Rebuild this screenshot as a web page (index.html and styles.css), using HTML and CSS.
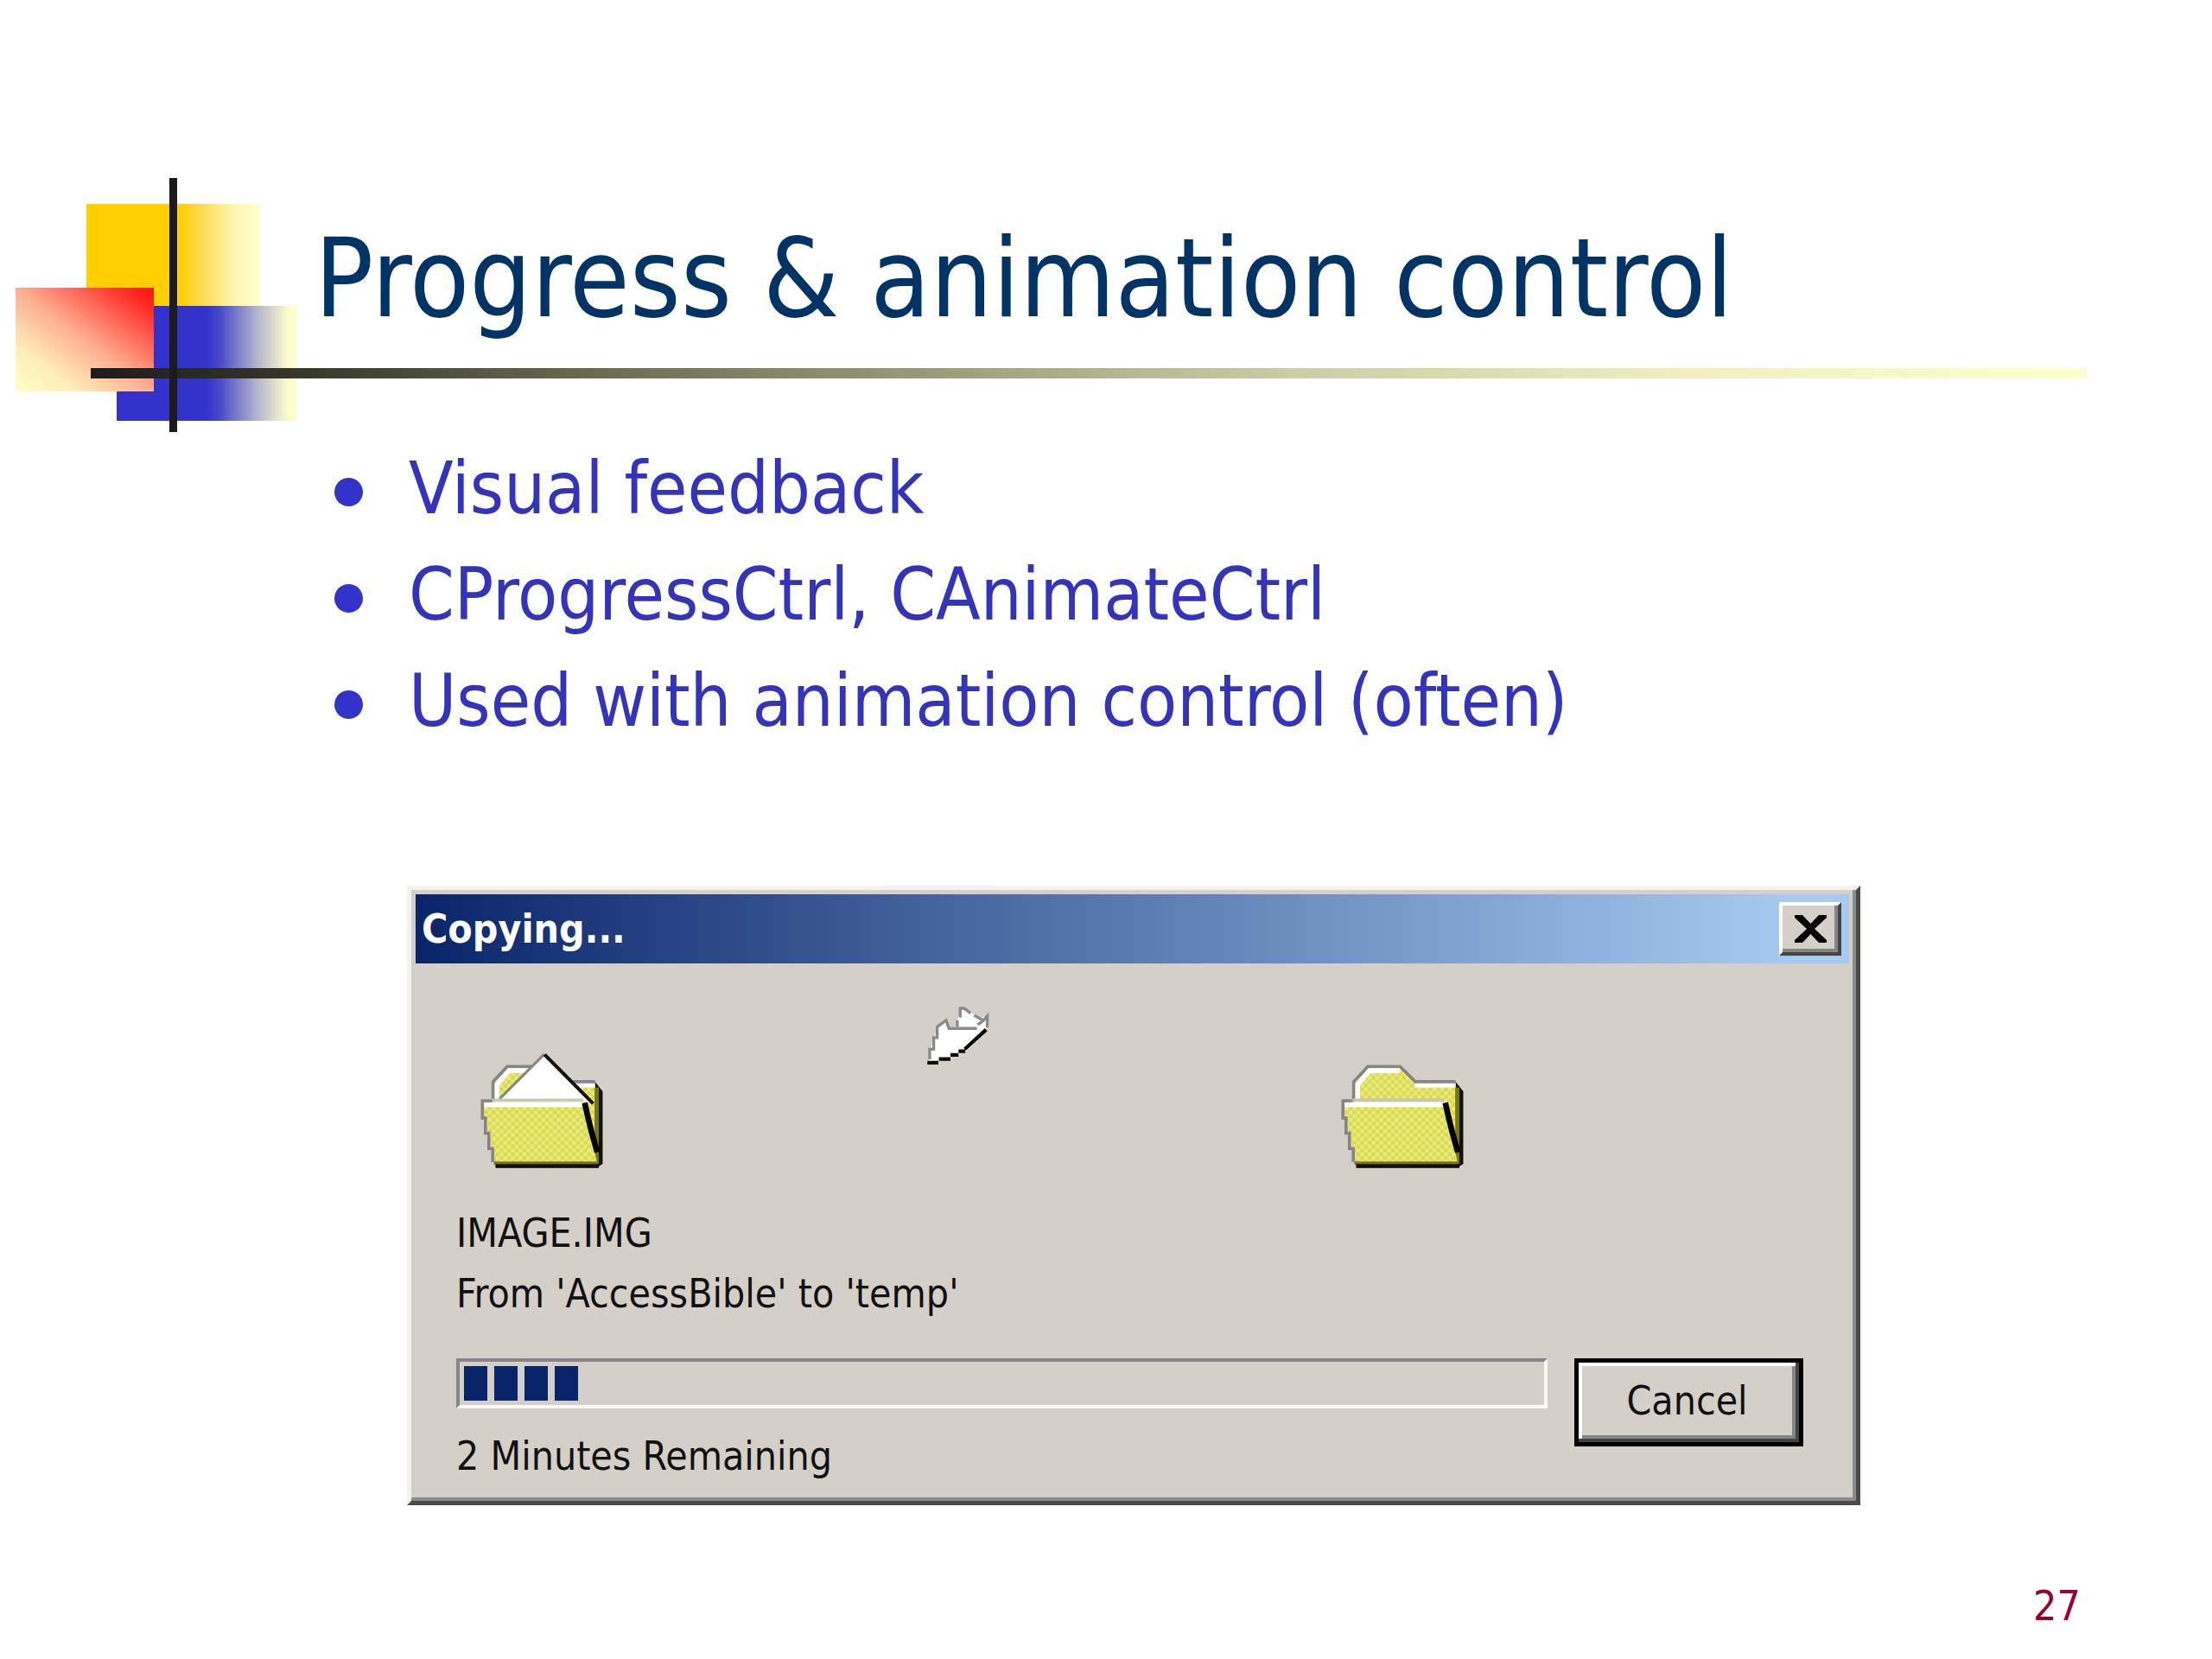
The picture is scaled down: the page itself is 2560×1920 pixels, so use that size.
FILE: index.html
```html
<!DOCTYPE html>
<html lang="en">
<head>
<meta charset="utf-8">
<title>Progress &amp; animation control</title>
<link rel="stylesheet" href="styles.css">
</head>
<body>
<main class="slide">
  <header class="slide-header">
    <svg class="logo" viewBox="0 0 376 320" aria-hidden="true">
      <defs>
        <linearGradient id="yellow"><stop offset=".54" stop-color="#ffcf00"/><stop offset=".62" stop-color="#ffd43c"/><stop offset=".85" stop-color="#fff6b0"/><stop offset="1" stop-color="#ffffcc"/></linearGradient>
        <linearGradient id="blue"><stop offset=".5" stop-color="#3333cc"/><stop offset=".57" stop-color="#4848c8"/><stop offset=".78" stop-color="#b4b4cc"/><stop offset=".95" stop-color="#fbfbcc"/><stop offset="1" stop-color="#ffffcc"/></linearGradient>
        <linearGradient id="red" x1="1" y1="0" x2="0" y2="1"><stop offset="0" stop-color="#ff1010"/><stop offset=".12" stop-color="#ff2d26"/><stop offset=".5" stop-color="#ffae92"/><stop offset=".78" stop-color="#ffeeb8"/><stop offset="1" stop-color="#ffffc4"/></linearGradient>
      </defs>
      <rect x="100" y="36" width="201" height="120" fill="url(#yellow)"/>
      <rect x="135" y="154" width="208" height="133" fill="url(#blue)"/>
      <rect x="18" y="133" width="160" height="120" fill="url(#red)"/>
    </svg>
    <h1 class="title">Progress &amp; animation control</h1>
    <div class="rule rule-horizontal"></div>
    <div class="rule rule-vertical"></div>
  </header>

  <ul class="points">
    <li>Visual feedback</li>
    <li>CProgressCtrl, CAnimateCtrl</li>
    <li>Used with animation control (often)</li>
  </ul>

  <section class="dialog" aria-labelledby="dialog-title">
    <div class="title-bar">
      <h2 class="dialog-title" id="dialog-title">Copying...</h2>
      <button class="close" type="button" aria-label="Close">
        <svg viewBox="0 0 37 32" aria-hidden="true"><path d="M0 0h9l9.500 10L28 0h9v3L23 16l14 13v3h-9l-9.500-10L9 32H0v-3l14-13L0 3z"/></svg>
      </button>
    </div>
    <div class="dialog-body">
      <svg class="animation" viewBox="0 0 1140 192" aria-hidden="true">
        <defs>
          <pattern id="dither" width="2" height="2" patternUnits="userSpaceOnUse">
            <rect width="2" height="2" fill="#d9d94a"/>
            <path d="M0 0h1v1H0zM1 1h1v1H1z" fill="#e9e982"/>
          </pattern>
          <g id="folder-back">
            <path d="M6 2 L8 .5H15.500L19.500 4.500H30L32 7V26L30.500 27H4L3.200 10V5z" fill="#111100"/>
            <path d="M3.500 10V4.800L7.200 .8H15.300L19.300 4.800H30V26H4z" fill="url(#dither)"/>
            <path d="M4.300 10V5.200L7.500 1.600H15.300M19.300 5.400H30" fill="none" stroke="#fff" stroke-width="1.300"/>
            <path d="M3.300 10V4.500L7 .5H15.500L19.500 4.500H30" fill="none" stroke="#858585" stroke-width=".8"/>
            <path d="M30 6h1v20h-1z" fill="#77770e"/>
          </g>
          <g id="folder-front">
            <path d="M.5 9.800H27L30.500 25.500H4L3.200 22 2 18 1.200 14z" fill="url(#dither)"/>
            <path d="M1 10.500H27" stroke="#fff" stroke-width="1.300"/>
            <path d="M2.800 9.300H27" stroke="#c4c4bc" stroke-width=".7"/>
            <path d="M3 9.500H.5V14H1.300V18H2.200V22H3.200V25.500" fill="none" stroke="#858585" stroke-width=".8"/>
            <path d="M27.300 10 28.200 14 29.200 18 30.600 23" fill="none" stroke="#000" stroke-width="1.500"/>
            <path d="M3.500 25.800H30.500" stroke="#77770e" stroke-width=".8"/>
            <path d="M4 26.600H31" stroke="#111100" stroke-width="1"/>
          </g>
        </defs>
        <g transform="translate(1 69) scale(4.420)">
          <use href="#folder-back"/>
          <path d="M5 9.500 16.700 -2.600 29 10z" fill="#fff"/>
          <path d="M5 9 16.700 -2.700" stroke="#858585" stroke-width=".7"/>
          <path d="M16.800 -2.600 29.500 10.200" stroke="#111" stroke-width=".9"/>
          <use href="#folder-front"/>
        </g>
        <g transform="translate(485 -32) scale(.333)">
          <path d="M104 294 112 245 124 210 134 172 165 150 172 172 200 172 215 108 285 140 308 138V175L275 220 235 258 190 275 150 288z" fill="#fff"/>
          <path d="M108 285V250H122V210H134V172L165 150 175 178H272M204 172V150M214 140V108H228L250 125M262 132 295 150 308 135V175M275 165 295 150" fill="none" stroke="#8a8a8a" stroke-width="10"/>
          <path d="M100 297H138M140 284H180M180 270H208M208 257H232M230 250 304 182" fill="none" stroke="#0a0a0a" stroke-width="13"/>
        </g>
        <g transform="translate(997 69) scale(4.420)">
          <use href="#folder-back"/>
          <use href="#folder-front"/>
        </g>
      </svg>
      <p class="line">IMAGE.IMG</p>
      <p class="line">From 'AccessBible' to 'temp'</p>
      <div class="controls">
        <div class="status">
          <progress class="bar" id="copy-progress" value="11" max="100"></progress>
          <label class="line" for="copy-progress">2 Minutes Remaining</label>
        </div>
        <button class="cancel" type="button">Cancel</button>
      </div>
    </div>
  </section>

  <footer class="page-number">27</footer>
</main>
</body>
</html>
```
FILE: styles.css
```css
* { box-sizing: border-box; }

body {
  margin: 0;
  background: #fff;
  font-family: "DejaVu Sans Condensed", "DejaVu Sans", sans-serif;
}

h1, h2, p, ul { margin: 0; padding: 0; font-weight: normal; }

.slide {
  display: flex;
  flex-direction: column;
  min-height: 100vh;
  padding-top: 200px;
}

.slide-header {
  position: relative;
  display: flex;
  height: 304px;
}

.logo { flex: none; width: 376px; height: 320px; }

.title {
  padding-top: 43px;
  margin-left: -12px;
  font-size: 126px;
  line-height: 160px;
  color: #003366;
}

.rule { position: absolute; }

.rule-horizontal {
  left: 105px;
  right: 145px;
  top: 226px;
  height: 12px;
  background: linear-gradient(to right, #1c1c1c, #38382f 11%, #6a6a50 25%, #a6a684 46%, #cccca2 60%, #f0eec2 80%, #ffffcc);
}

.rule-vertical {
  left: 196px;
  top: 6px;
  width: 9px;
  height: 294px;
  background: #1c1c1c;
}

.points {
  list-style: none;
  padding-left: 387px;
  font-size: 84px;
  line-height: 123px;
  color: #3333bb;
}

.points li { display: flex; align-items: center; gap: 53px; }

.points li::before {
  content: "";
  width: 33px;
  height: 33px;
  margin-top: 8px;
  border-radius: 50%;
  background: #3333cc;
}

.dialog {
  margin: 152px 407px 0 471px;
  padding: 5px;
  background: #d4cfc8;
  border: 5px solid;
  border-color: #f4f2ee #4a4a4a #4a4a4a #f4f2ee;
  box-shadow: inset -4px -4px #8c8c88;
}

.title-bar {
  display: flex;
  align-items: center;
  justify-content: space-between;
  height: 80px;
  margin-right: 3px;
  padding: 0 9px 0 7px;
  background: linear-gradient(to right, #0a246a, #a6caf0 96%);
}

.dialog-title {
  font-size: 46px;
  font-weight: bold;
  line-height: 72px;
  color: #fff;
}

.close {
  display: grid;
  place-items: center;
  width: 72px;
  height: 62px;
  padding: 0;
  border: 4px solid;
  border-color: #fff #444 #444 #fff;
  background: #d4cfc8;
  box-shadow: inset -4px -4px #858585;
}

.close svg { width: 37px; height: 32px; }

.dialog-body { padding: 48px 56px 12px 47px; }

.animation { display: block; width: 1140px; height: 192px; margin-left: 27px; }

.line {
  display: block;
  font-size: 46px;
  line-height: 70px;
  color: #111;
}

.animation + .line { margin-top: 37px; }

.controls {
  display: flex;
  align-items: flex-start;
  gap: 31px;
  margin-top: 40px;
}

.status { flex: 1; }

.bar {
  display: block;
  appearance: none;
  width: 100%;
  height: 58px;
  margin-bottom: 20px;
  padding: 5px;
  border: 4px solid;
  border-color: #858585 #fbf9f6 #fbf9f6 #858585;
  background: #d4cfc8;
}

.bar::-webkit-progress-bar { background: transparent; }

.bar::-webkit-progress-value {
  background: repeating-linear-gradient(to right, #0a246a 0 27px, transparent 27px 35px);
}

.cancel {
  width: 265px;
  height: 102px;
  padding: 0 4px 4px 0;
  border: 5px solid #000;
  background: #d4cfc8;
  box-shadow: inset -4px -4px #444, inset 4px 4px #fff, inset -8px -8px #858585;
  font-family: inherit;
  font-size: 46px;
  color: #111;
}

.page-number {
  margin-top: auto;
  padding: 0 152px 27px 0;
  font-size: 48px;
  line-height: 70px;
  text-align: right;
  color: #990033;
}
```
